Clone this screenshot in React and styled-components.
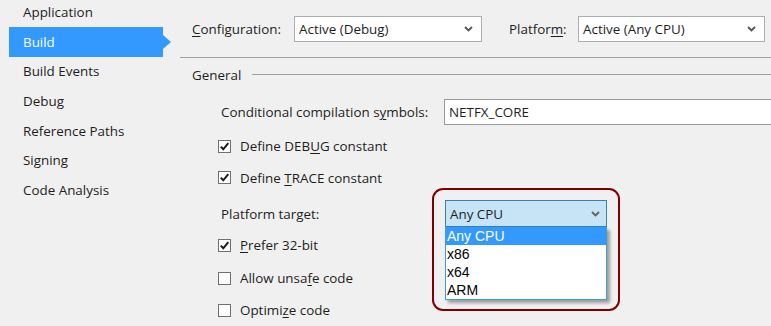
import styled, { createGlobalStyle } from "styled-components";

const Global = createGlobalStyle`
  html, body { margin: 0; padding: 0; background: #f0f0f0; }
  body { font-family: "Open Sans", "Noto Sans", sans-serif; font-size: 13.4px; color: #1e1e1e; }
`;

const Page = styled.div`
  display: flex;
  width: 771px;
  height: 326px;
  overflow: hidden;
  background: #f0f0f0;
`;

const Sidebar = styled.div`
  width: 171px;
  padding-left: 9px;
  flex-shrink: 0;
`;

const NavItem = styled.div`
  position: relative;
  width: 154px;
  height: ${(p) => p.$h || 29.6}px;
  display: flex;
  align-items: center;
  padding-left: 14px;
  padding-bottom: ${(p) => p.$pb || 0}px;
  box-sizing: border-box;
  background: ${(p) => (p.$active ? "#3399ff" : "transparent")};
  color: ${(p) => (p.$active ? "#ffffff" : "#1e1e1e")};
  &::after {
    content: "";
    display: ${(p) => (p.$active ? "block" : "none")};
    position: absolute;
    right: -8px;
    top: 50%;
    margin-top: -7px;
    border-left: 8px solid #3399ff;
    border-top: 7px solid transparent;
    border-bottom: 7px solid transparent;
  }
`;

const Main = styled.div`
  flex: 1;
  display: flex;
  flex-direction: column;
`;

const TopBar = styled.div`
  height: 56px;
  border-bottom: 1px solid #a0a0a0;
  display: flex;
  align-items: center;
  padding-left: 12px;
  padding-top: 1px;
  box-sizing: content-box;
`;

const TopLabel = styled.div`
  width: ${(p) => p.$w}px;
  padding-left: ${(p) => p.$pl || 0}px;
  box-sizing: border-box;
`;

const Combo = styled.div`
  width: ${(p) => p.$w}px;
  height: 26px;
  box-sizing: border-box;
  border: 1px solid #abadb3;
  background: #ffffff;
  display: flex;
  align-items: center;
  justify-content: space-between;
  padding: 0 8px 0 4px;
`;

const Section = styled.div`
  height: 34px;
  display: flex;
  align-items: center;
  padding-left: 12px;
`;

const SectionLine = styled.div`
  flex: 1;
  height: 1px;
  background: #a0a0a0;
  margin-left: 11px;
  margin-top: -1px;
`;

const Row = styled.div`
  height: ${(p) => p.$h || 32}px;
  margin-top: ${(p) => p.$mt || 0}px;
  padding-top: ${(p) => p.$pt || 0}px;
  box-sizing: border-box;
  display: flex;
  align-items: center;
  padding-left: ${(p) => p.$pl || 41}px;
`;

const FieldLabel = styled.div`
  width: 223px;
  flex-shrink: 0;
`;

const TextBox = styled.div`
  flex: 1;
  height: 26px;
  box-sizing: border-box;
  border: 1px solid #999999;
  border-right: none;
  background: #ffffff;
  display: flex;
  align-items: center;
  padding-left: 4px;
`;

const Box = styled.div`
  width: 13px;
  height: 13px;
  box-sizing: border-box;
  border: 1px solid #707070;
  background: #ffffff;
  margin-right: 9px;
  display: flex;
  align-items: center;
  justify-content: center;
`;

const U = styled.span`
  text-decoration: underline;
  text-underline-offset: 2px;
`;

const TargetWrap = styled.div`
  position: relative;
  margin-left: 1px;
`;

const TargetCombo = styled.div`
  width: 162px;
  height: 27px;
  box-sizing: border-box;
  border: 1px solid #3c7fb1;
  background: #c6e4f6;
  display: flex;
  align-items: center;
  justify-content: space-between;
  padding: 0 6px 0 4px;
`;

const Popup = styled.div`
  position: absolute;
  left: 0;
  top: 27px;
  width: 162px;
  box-sizing: border-box;
  border: 1px solid #3e9fcc;
  border-top: none;
  background: #ffffff;
  box-shadow: 3px 3px 3px rgba(0, 0, 0, 0.35);
  font-family: "Liberation Sans", Arial, sans-serif;
  font-size: 14px;
  z-index: 2;
`;

const Option = styled.div`
  height: 18px;
  line-height: 18px;
  padding-left: 1px;
  background: ${(p) => (p.$sel ? "#3399ff" : "transparent")};
  color: ${(p) => (p.$sel ? "#ffffff" : "#000000")};
`;

const Highlight = styled.div`
  position: absolute;
  left: -13px;
  top: -12px;
  width: 188px;
  height: 123px;
  box-sizing: border-box;
  border: 2px solid #800000;
  border-radius: 11px;
  pointer-events: none;
`;

const Chevron = ({ color = "#555" }) => (
  <svg width="9" height="6" viewBox="0 0 9 6">
    <path d="M1 1 L4.5 4.5 L8 1" fill="none" stroke={color} strokeWidth="1.8" />
  </svg>
);

const Check = () => (
  <svg width="11" height="11" viewBox="0 0 11 11">
    <path d="M1.8 5.6 L4.3 8.3 L9.3 2.2" fill="none" stroke="#1a1a1a" strokeWidth="2" />
  </svg>
);

const CheckRow = ({ checked, children, mt }) => (
  <Row $pl={38} $mt={mt}>
    <Box>{checked && <Check />}</Box>
    <span>{children}</span>
  </Row>
);

const nav = ["Application", "Build", "Build Events", "Debug", "Reference Paths", "Signing", "Code Analysis"];

export default function App() {
  return (
    <Page>
      <Global />
      <Sidebar>
        {nav.map((n, i) => (
          <NavItem
            key={n}
            $active={n === "Build"}
            $h={i === 0 ? 27 : undefined}
            $pb={i === 0 ? 3 : 0}
          >
            {n}
          </NavItem>
        ))}
      </Sidebar>
      <Main>
        <TopBar>
          <TopLabel $w={102}>
            <U>C</U>onfiguration:
          </TopLabel>
          <Combo $w={188}>
            <span>Active (Debug)</span>
            <Chevron />
          </Combo>
          <TopLabel $w={96} $pl={27}>
            Platfor<U>m</U>:
          </TopLabel>
          <Combo $w={187}>
            <span>Active (Any CPU)</span>
            <Chevron />
          </Combo>
        </TopBar>
        <Section>
          <span>General</span>
          <SectionLine />
        </Section>
        <Row $h={39} $pt={3}>
          <FieldLabel>
            Conditional compilation s<U>y</U>mbols:
          </FieldLabel>
          <TextBox>NETFX_CORE</TextBox>
        </Row>
        <CheckRow checked>
          Define DEB<U>U</U>G constant
        </CheckRow>
        <CheckRow checked>
          Define <U>T</U>RACE constant
        </CheckRow>
        <Row $mt={4}>
          <FieldLabel>
            Platform tar<U>g</U>et:
          </FieldLabel>
          <TargetWrap>
            <TargetCombo>
              <span>Any CPU</span>
              <Chevron color="#606060" />
            </TargetCombo>
            <Popup>
              <Option $sel>Any CPU</Option>
              <Option>x86</Option>
              <Option>x64</Option>
              <Option>ARM</Option>
            </Popup>
            <Highlight />
          </TargetWrap>
        </Row>
        <CheckRow checked>
          <U>P</U>refer 32-bit
        </CheckRow>
        <CheckRow mt={1}>
          Allow unsa<U>f</U>e code
        </CheckRow>
        <CheckRow>
          Optimi<U>z</U>e code
        </CheckRow>
      </Main>
    </Page>
  );
}
